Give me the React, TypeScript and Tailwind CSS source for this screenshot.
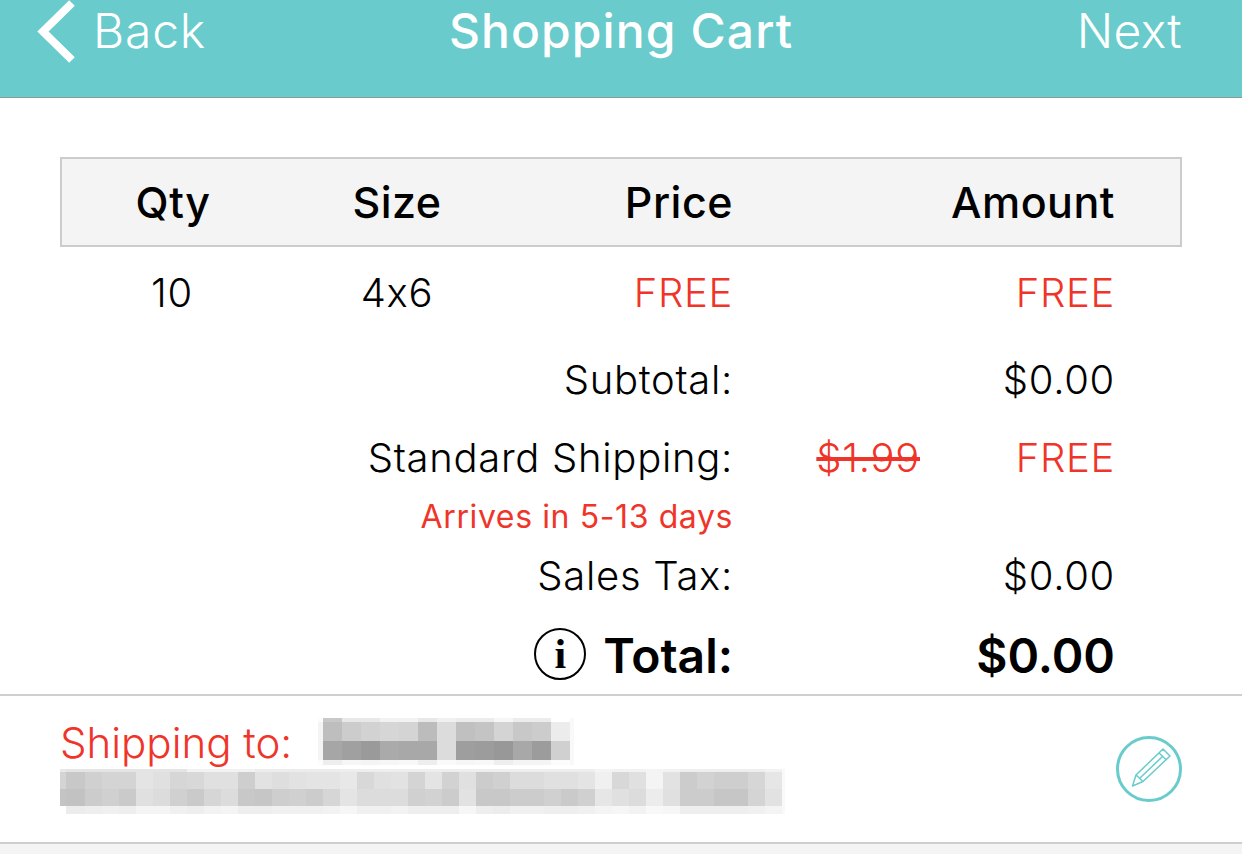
const teal = '#69cbcb';

type MosaicRow = { h: number; lead: string; c: string[] };

const nameRows: MosaicRow[] = [
  { h: 4, lead: 'fc', c: ['c8', 'e8', 'e8', 'f2', 'f2', 'e8', 'f0', 'ec', 'ec', 'f6', 'ec', 'ec', 'ff'] },
  { h: 19, lead: 'f4', c: ['be', 'cc', 'd2', 'd6', 'd4', 'bc', 'dc', 'c0', 'c4', 'd4', 'c8', 'cc', 'ec'] },
  { h: 19, lead: 'f4', c: ['a6', 'a0', '9a', 'aa', 'a8', 'a8', 'dc', '9e', '9c', '98', 'a8', '9c', 'd0'] },
  { h: 5, lead: 'fc', c: ['ee', 'f6', 'f4', 'f6', 'f8', 'ee', 'fa', 'f6', 'f8', 'ee', 'f4', 'f4', 'fc'] },
];

const addrRows: MosaicRow[] = [
  { h: 3, lead: 'e8', c: ['e4', 'e4', 'e4', 'e4', 'e4', 'e4', 'e4', 'f2', 'f2', 'f2', 'f2', 'ec', 'ec', 'ec', 'ec', 'ec', 'ee', 'ee', 'ee', 'ee', 'ee', 'ee', 'ee', 'ee', 'ee', 'ee', 'ee', 'ee', 'ee', 'ee', 'ee', 'f4', 'f2', 'f2', 'f4', 'f2', 'ee', 'ee', 'ee', 'ee', 'ee', 'f2'] },
  { h: 17, lead: 'd4', c: ['c8', 'd0', 'd4', 'd4', 'e4', 'e0', 'd6', 'd8', 'e0', 'e0', 'ce', 'e2', 'de', 'e2', 'e4', 'e4', 'e8', 'd8', 'e0', 'e2', 'd4', 'e4', 'd2', 'e0', 'cc', 'd0', 'dc', 'dc', 'e0', 'e0', 'e4', 'f0', 'd8', 'e0', 'f4', 'e2', 'cc', 'd2', 'ce', 'ce', 'd6', 'e6'] },
  { h: 17, lead: 'c4', c: ['c2', 'cc', 'd0', 'ca', 'e0', 'dc', 'd0', 'ca', 'd6', 'dc', 'c8', 'c6', 'ce', 'd0', 'cc', 'd6', 'e4', 'dc', 'dc', 'dc', 'd0', 'd2', 'cc', 'e2', 'c8', 'c8', 'cc', 'cc', 'd0', 'ca', 'd0', 'e6', 'e0', 'dc', 'ec', 'e0', 'cc', 'cc', 'c6', 'c6', 'd4', 'e2'] },
  { h: 8, lead: 'ff', c: ['ec', 'ee', 'f0', 'ee', 'f4', 'f4', 'f0', 'ee', 'f2', 'f4', 'ee', 'ee', 'f0', 'f0', 'f0', 'f2', 'f6', 'f0', 'f0', 'f2', 'ee', 'ee', 'ee', 'f6', 'ee', 'ec', 'f0', 'f0', 'ee', 'ee', 'f0', 'f4', 'f6', 'f2', 'f8', 'f6', 'ee', 'ee', 'ee', 'ee', 'f0', 'f4'] },
];

function Mosaic({ rows, cell, lead, first, tail }: { rows: MosaicRow[]; cell: number; lead: number; first: number; tail: number }) {
  const total = rows.reduce((sum, r) => sum + r.h, 0);
  const cols = rows[0].c.length;
  const right = lead + first + (cols - 1) * cell;
  let y = 0;
  return (
    <svg width={right + tail} height={total} className="block shrink-0" shapeRendering="crispEdges">
      {rows.map((r) => {
        const top = y;
        y += r.h;
        return (
          <g key={top}>
            <rect x={0} y={top} width={lead} height={r.h} fill={`#${r.lead}${r.lead}${r.lead}`} />
            {r.c.map((v, i) => (
              <rect
                key={i}
                x={i === 0 ? lead : lead + first + (i - 1) * cell}
                y={top}
                width={i === 0 ? first : cell}
                height={r.h}
                fill={`#${v}${v}${v}`}
              />
            ))}
            <rect x={right} y={top} width={tail} height={r.h} fill="#f9f9f9" />
          </g>
        );
      })}
    </svg>
  );
}

function PencilIcon() {
  return (
    <div className="w-[66px] h-[66px] rounded-full border-[3px] border-[#69cbcb] flex items-center justify-center">
      <svg width="66" height="66" viewBox="0 0 66 66" fill="none" stroke={teal} strokeWidth="1.5" strokeLinejoin="round" className="shrink-0">
        <path d="M16.5 50 L20 39 L47 13 L54 20 L27 45.5 Z" />
        <path d="M20 39 L27 45.5" />
        <path d="M23.5 42.5 L47 20" />
        <path d="M43 17 L50.5 24" />
      </svg>
    </div>
  );
}

function SummaryRow({ label, amount, strike, red, className }: { label: string; amount: string; strike?: string; red?: boolean; className?: string }) {
  return (
    <div className={`flex items-center text-[40px] leading-[48px] font-light tracking-[0.7px] ${className ?? ''}`}>
      <div className="w-[673px] text-right">{label}</div>
      <div className="w-[187px] text-right text-[#ef3529]">
        {strike && <span className="line-through">{strike}</span>}
      </div>
      <div className={`w-[195px] text-right ${red ? 'text-[#ef3529]' : ''}`}>{amount}</div>
    </div>
  );
}

export default function App() {
  return (
    <div className="w-[1242px] h-[854px] overflow-hidden bg-white text-black flex flex-col font-['Inter',sans-serif] [font-feature-settings:'calt'_0]">
      <header className="h-[98px] shrink-0 bg-[#69cbcb] border-b border-[#8a9c9c] flex items-center justify-between text-white pl-[36px] pr-[60px] pb-[33px]">
        <div className="flex items-center gap-[17px] w-[324px]">
          <svg width="40" height="64" viewBox="0 0 40 64" fill="none" stroke="white" strokeWidth="8" strokeLinecap="butt" className="shrink-0">
            <path d="M36 3 L7 31.5 L36 60" />
          </svg>
          <span className="text-[48px] leading-none font-light tracking-[0.8px] pb-[2px]">Back</span>
        </div>
        <h1 className="text-[48px] leading-none font-medium tracking-[1.1px] pb-[2px]">Shopping Cart</h1>
        <div className="w-[300px] text-right text-[48px] leading-none font-light tracking-[0.4px] pb-[2px]">Next</div>
      </header>

      <main className="flex-1 flex flex-col min-h-0">
        <div className="px-[60px] pt-[59px]">
          <div className="h-[90px] bg-[#f4f4f4] border-2 border-[#cccccc] flex items-center text-[43px] font-medium tracking-[0.5px] pt-[1px]">
            <div className="w-[222px] text-center">Qty</div>
            <div className="w-[226px] text-center">Size</div>
            <div className="w-[223px] text-right">Price</div>
            <div className="w-[382px] text-right">Amount</div>
          </div>
        </div>

        <div className="flex items-center text-[40px] leading-[48px] font-light tracking-[0.7px] pl-[60px] mt-[22px]">
          <div className="w-[224px] text-center">10</div>
          <div className="w-[226px] text-center">4x6</div>
          <div className="w-[223px] text-right text-[#ef3529]">FREE</div>
          <div className="w-[382px] text-right text-[#ef3529]">FREE</div>
        </div>

        <div className="pl-[60px] mt-[39px] flex flex-col">
          <SummaryRow label="Subtotal:" amount="$0.00" />
          <SummaryRow label="Standard Shipping:" strike="$1.99" amount="FREE" red className="mt-[30px]" />
          <div className="w-[673px] text-right text-[32px] leading-[40px] tracking-[0.6px] text-[#ef3529] mt-[15px]">Arrives in 5-13 days</div>
          <SummaryRow label="Sales Tax:" amount="$0.00" className="mt-[15px]" />
          <div className="flex items-center text-[48px] leading-[56px] font-semibold mt-[28px]">
            <div className="w-[673px] flex items-center justify-end gap-[17px]">
              <div className="w-[52px] h-[52px] mb-[4px] rounded-full border-2 border-black flex items-center justify-center text-[42px] leading-none font-bold font-['Liberation_Serif',serif]">i</div>
              <span>Total:</span>
            </div>
            <div className="w-[382px] text-right">$0.00</div>
          </div>
        </div>

        <div className="mt-[10px] h-[150px] shrink-0 border-y-2 border-[#cfcfcf] px-[60px] flex items-center justify-between">
          <div className="flex flex-col mb-[6px]">
            <div className="flex items-start h-[51px]">
              <span className="text-[42px] leading-[50px] font-light text-[#ef3529] w-[258px]">Shipping to:</span>
              <Mosaic rows={nameRows} cell={19} lead={5} first={19} tail={4} />
            </div>
            <Mosaic rows={addrRows} cell={17} lead={6} first={19} tail={3} />
          </div>
          <PencilIcon />
        </div>
        <div className="flex-1 bg-[#f4f4f4]" />
      </main>
    </div>
  );
}
